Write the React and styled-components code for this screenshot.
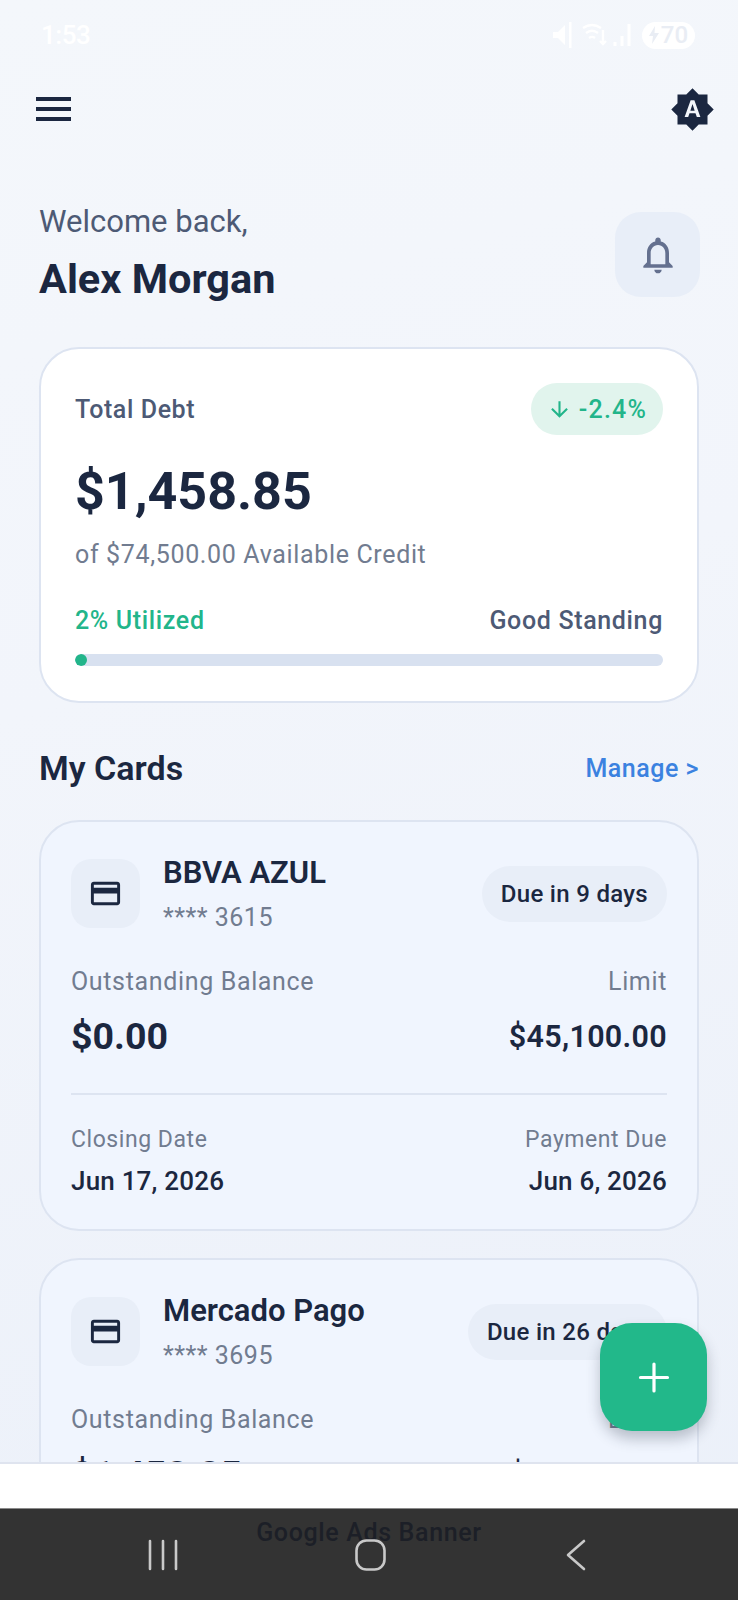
import React from "react";
import styled, { createGlobalStyle } from "styled-components";

const GlobalStyle = createGlobalStyle`
  html, body { margin: 0; padding: 0; background: #fff; }
  * { box-sizing: border-box; }
  body { font-family: Roboto, "Liberation Sans", sans-serif; }
`;

const Screen = styled.div`
  position: relative;
  width: 738px;
  height: 1600px;
  overflow: hidden;
  display: flex;
  flex-direction: column;
  background: linear-gradient(165deg, #f4f7fb 0%, #f2f5fb 40%, #ebf0f9 100%);
`;

const StatusBar = styled.div`
  height: 70px;
  flex: none;
  padding: 0 43px 0 41px;
  display: flex;
  align-items: center;
  justify-content: space-between;
  color: #fff;
`;
const Clock = styled.span`
  font-size: 26px;
  font-weight: 500;
  letter-spacing: -0.5px;
`;
const StatusIcons = styled.div`
  display: flex;
  align-items: center;
  gap: 7px;
`;
const Battery = styled.span`
  width: 53px;
  height: 27px;
  border-radius: 14px;
  background: #fff;
  color: #e9edf4;
  font-size: 24px;
  font-weight: 500;
  line-height: 27px;
  display: flex;
  align-items: center;
  justify-content: center;
  gap: 2px;
`;

const AppBar = styled.div`
  height: 78px;
  flex: none;
  padding: 0 23px 0 36px;
  display: flex;
  align-items: center;
  justify-content: space-between;
`;
const Burger = styled.div`
  width: 35px;
  display: flex;
  flex-direction: column;
  gap: 6px;
  span {
    display: block;
    height: 4px;
    background: #1b2740;
  }
`;

const Content = styled.div`
  flex: 1;
  min-height: 0;
  overflow: hidden;
  padding: 0 39px;
`;

const Greeting = styled.div`
  display: flex;
  justify-content: space-between;
  align-items: flex-start;
  padding-top: 54px;
`;
const WelcomeText = styled.div`
  font-size: 31px;
  line-height: 40px;
  color: #4d5a75;
`;
const UserName = styled.div`
  font-size: 41.5px;
  line-height: 48px;
  font-weight: 700;
  color: #1b2740;
  margin-top: 13px;
`;
const BellButton = styled.div`
  width: 85px;
  height: 85px;
  margin: 10px -1px 0 0;
  border-radius: 26px;
  background: #e8eef8;
  display: flex;
  align-items: center;
  justify-content: center;
`;

const HeroCard = styled.div`
  margin-top: 44px;
  height: 356px;
  background: #fff;
  border: 2px solid #dde4f1;
  border-radius: 40px;
  padding: 34px 34px 0;
`;
const Row = styled.div`
  display: flex;
  justify-content: space-between;
  align-items: ${(p) => p.$align || "center"};
`;
const HeroLabel = styled.div`
  font-size: 25px;
  font-weight: 500;
  letter-spacing: 0.6px;
  color: #4d5a75;
`;
const TrendPill = styled.div`
  height: 52px;
  width: 132px;
  border-radius: 26px;
  background: #e1f4ed;
  color: #22b58a;
  font-size: 25px;
  font-weight: 500;
  letter-spacing: 1.2px;
  display: flex;
  align-items: center;
  justify-content: center;
  gap: 7px;
`;
const HeroAmount = styled.div`
  margin-top: 27px;
  font-size: 52px;
  line-height: 60px;
  font-weight: 700;
  color: #1b2740;
`;
const HeroSub = styled.div`
  margin-top: 17px;
  font-size: 25px;
  line-height: 32px;
  letter-spacing: 0.65px;
  color: #717c90;
`;
const UsageRow = styled(Row)`
  margin-top: 34px;
  font-size: 25px;
  line-height: 32px;
  font-weight: 500;
  letter-spacing: 0.65px;
`;
const UsageText = styled.span`
  color: ${(p) => p.$color};
`;
const Track = styled.div`
  margin-top: 17px;
  height: 12px;
  border-radius: 6px;
  background: #d8e1f0;
  overflow: hidden;
`;
const Fill = styled.div`
  height: 100%;
  border-radius: 6px;
  background: #22b58a;
`;

const SectionHead = styled(Row)`
  margin-top: 45px;
  height: 40px;
`;
const SectionTitle = styled.div`
  font-size: 34px;
  font-weight: 600;
  color: #1b2740;
`;
const ManageLink = styled.div`
  font-size: 25px;
  font-weight: 500;
  letter-spacing: 0.5px;
  color: #3b82e0;
`;

const CardList = styled.div`
  margin-top: 32px;
  display: flex;
  flex-direction: column;
  gap: 27px;
`;
const CreditCard = styled.div`
  height: 411px;
  flex: none;
  background: #f0f5fe;
  border: 2px solid #dde4f1;
  border-radius: 40px;
  padding: 36px 30px 0;
`;
const CardTop = styled.div`
  display: flex;
  align-items: center;
  height: 70px;
`;
const IconBox = styled.div`
  width: 69px;
  height: 69px;
  flex: none;
  border-radius: 20px;
  background: #e8eef8;
  display: flex;
  align-items: center;
  justify-content: center;
`;
const CardInfo = styled.div`
  margin-left: 23px;
  flex: 1;
`;
const CardName = styled.div`
  font-size: 31px;
  line-height: 36px;
  font-weight: 600;
  color: #1b2740;
  margin-top: 1px;
`;
const CardNumber = styled.div`
  margin-top: 12px;
  font-size: 25px;
  line-height: 30px;
  letter-spacing: 0.5px;
  color: #717c90;
`;
const DuePill = styled.div`
  height: 56px;
  padding: 0 19px;
  margin-top: 2px;
  border-radius: 28px;
  background: #e8eef8;
  color: #1b2740;
  font-size: 24px;
  font-weight: 500;
  letter-spacing: 0.3px;
  line-height: 56px;
  white-space: nowrap;
`;
const FigureLabel = styled.div`
  font-size: 25px;
  line-height: 32px;
  letter-spacing: 0.65px;
  color: #717c90;
`;
const BalanceLabels = styled(Row)`
  margin-top: 38px;
`;
const BalanceValues = styled(Row)`
  margin-top: 14px;
  height: 48px;
  padding-bottom: 33px;
  box-sizing: content-box;
  border-bottom: 2px solid #dde4f1;
  color: #1b2740;
`;
const Balance = styled.div`
  font-size: 37.5px;
  font-weight: 700;
`;
const Limit = styled.div`
  font-size: 30.5px;
  font-weight: 600;
  letter-spacing: 0.3px;
`;
const DateLabel = styled.div`
  font-size: 23px;
  line-height: 30px;
  letter-spacing: 0.55px;
  color: #717c90;
`;
const DateValue = styled.div`
  margin-top: 10px;
  font-size: 26px;
  line-height: 32px;
  font-weight: 500;
  letter-spacing: 0.2px;
  color: #1b2740;
`;
const DateCol = styled.div`
  text-align: ${(p) => p.$align || "left"};
`;
const DatesRow = styled(Row)`
  margin-top: 30px;
`;

const AdBanner = styled.div`
  flex: none;
  height: 138px;
  background: #fff;
  border-top: 2px solid #dfe4ef;
`;

const Fab = styled.div`
  position: absolute;
  left: 600px;
  top: 1323px;
  width: 107px;
  height: 108px;
  border-radius: 32px;
  background: #22b88a;
  box-shadow: 0 8px 14px rgba(40, 50, 70, 0.28);
  display: flex;
  align-items: center;
  justify-content: center;
`;

const NavBar = styled.div`
  position: absolute;
  left: 0;
  right: 0;
  bottom: 0;
  height: 92px;
  background: #333333;
  border-top: 1px solid #8a8a8a;
  display: grid;
  grid-template-columns: 328px 82px 1fr;
  align-items: center;
`;
const AdLabel = styled.div`
  position: absolute;
  left: 0;
  right: 0;
  top: 10px;
  text-align: center;
  font-size: 25px;
  line-height: 28px;
  font-weight: 500;
  letter-spacing: 0.65px;
  color: #1c1f27;
`;
const NavSlot = styled.div`
  position: relative;
  display: flex;
  justify-content: ${(p) => p.$justify || "center"};
  padding: ${(p) => p.$pad || 0};
`;

const Glyph = ({ d, size, color }) => (
  <svg width={size} height={size} viewBox="0 0 24 24" fill={color} style={{ display: "block" }}>
    <path d={d} />
  </svg>
);

const ICONS = {
  auto: "M10.85 12.65h2.3L12 9l-1.15 3.65zM20 8.69V4h-4.69L12 .69 8.69 4H4v4.69L.69 12 4 15.31V20h4.69L12 23.31 15.31 20H20v-4.69L23.31 12 20 8.69zM14.3 16l-.7-2h-3.2l-.7 2H7.8L11 7h2l3.2 9h-1.9z",
  bell: "M12 22c1.1 0 2-.9 2-2h-4c0 1.1.9 2 2 2zm6-6v-5c0-3.07-1.63-5.64-4.5-6.32V4c0-.83-.67-1.5-1.5-1.5s-1.5.67-1.5 1.5v.68C7.64 5.36 6 7.92 6 11v5l-2 2v1h16v-1l-2-2zm-2 1H8v-6c0-2.48 1.51-4.5 4-4.5s4 2.02 4 4.5v6z",
  card: "M20 4H4c-1.11 0-1.99.89-1.99 2L2 18c0 1.11.89 2 2 2h16c1.11 0 2-.89 2-2V6c0-1.11-.89-2-2-2zm0 14H4v-6h16v6zm0-10H4V6h16v2z",
  down: "M20 12l-1.41-1.41L13 16.17V4h-2v12.17l-5.58-5.59L4 12l8 8 8-8z",
};

const cards = [
  {
    name: "BBVA AZUL",
    number: "**** 3615",
    due: "Due in 9 days",
    balance: "$0.00",
    limit: "$45,100.00",
    closing: "Jun 17, 2026",
    payment: "Jun 6, 2026",
  },
  {
    name: "Mercado Pago",
    number: "**** 3695",
    due: "Due in 26 days",
    balance: "$1,458.85",
    limit: "$29,400.00",
    closing: "Jun 20, 2026",
    payment: "Jun 23, 2026",
  },
];

const App = () => (
  <Screen>
    <GlobalStyle />
    <StatusBar>
      <Clock>1:53</Clock>
      <StatusIcons>
        <svg width="22" height="26" viewBox="0 0 22 26" fill="#fff">
          <path d="M1 10h5l7-7v20l-7-7H1z" />
          <rect x="17" y="0" width="2.5" height="26" />
        </svg>
        <svg width="54" height="26" viewBox="0 0 54 26" fill="none" stroke="#fff" strokeWidth="2.4">
          <path d="M2 6c6-4 12-4 18 0M5 11c4-3 8-3 12 0M8 16c2-1.5 4-1.5 6 0" />
          <path d="M22 8v14m-3-3l3 3 3-3" />
          <path d="M34 24v-4M41 24v-10M48 24V2" strokeWidth="3" />
        </svg>
        <Battery>
          <svg width="10" height="18" viewBox="0 0 10 18" fill="#e9edf4">
            <path d="M6 0L0 10h4l-1 8 7-11H5.500z" />
          </svg>
          70
        </Battery>
      </StatusIcons>
    </StatusBar>

    <AppBar>
      <Burger>
        <span />
        <span />
        <span />
      </Burger>
      <Glyph d={ICONS.auto} size={45} color="#1b2740" />
    </AppBar>

    <Content>
      <Greeting>
        <div>
          <WelcomeText>Welcome back,</WelcomeText>
          <UserName>Alex Morgan</UserName>
        </div>
        <BellButton>
          <Glyph d={ICONS.bell} size={44} color="#64708f" />
        </BellButton>
      </Greeting>

      <HeroCard>
        <Row>
          <HeroLabel>Total Debt</HeroLabel>
          <TrendPill>
            <Glyph d={ICONS.down} size={25} color="#22b58a" />
            -2.4%
          </TrendPill>
        </Row>
        <HeroAmount>$1,458.85</HeroAmount>
        <HeroSub>of $74,500.00 Available Credit</HeroSub>
        <UsageRow>
          <UsageText $color="#22b58a">2% Utilized</UsageText>
          <UsageText $color="#4d5a75">Good Standing</UsageText>
        </UsageRow>
        <Track>
          <Fill style={{ width: "2%" }} />
        </Track>
      </HeroCard>

      <SectionHead>
        <SectionTitle>My Cards</SectionTitle>
        <ManageLink>Manage &gt;</ManageLink>
      </SectionHead>

      <CardList>
        {cards.map((card) => (
          <CreditCard key={card.name}>
            <CardTop>
              <IconBox>
                <Glyph d={ICONS.card} size={35} color="#1b2740" />
              </IconBox>
              <CardInfo>
                <CardName>{card.name}</CardName>
                <CardNumber>{card.number}</CardNumber>
              </CardInfo>
              <DuePill>{card.due}</DuePill>
            </CardTop>
            <BalanceLabels>
              <FigureLabel>Outstanding Balance</FigureLabel>
              <FigureLabel>Limit</FigureLabel>
            </BalanceLabels>
            <BalanceValues>
              <Balance>{card.balance}</Balance>
              <Limit>{card.limit}</Limit>
            </BalanceValues>
            <DatesRow>
              <DateCol>
                <DateLabel>Closing Date</DateLabel>
                <DateValue>{card.closing}</DateValue>
              </DateCol>
              <DateCol $align="right">
                <DateLabel>Payment Due</DateLabel>
                <DateValue>{card.payment}</DateValue>
              </DateCol>
            </DatesRow>
          </CreditCard>
        ))}
      </CardList>
    </Content>

    <AdBanner />

    <Fab>
      <svg width="46" height="46" viewBox="0 0 46 46" stroke="#fff" strokeWidth="3.2" strokeLinecap="round">
        <path d="M23 10v27M9.5 23.500h27" />
      </svg>
    </Fab>

    <NavBar>
      <AdLabel>Google Ads Banner</AdLabel>
      <NavSlot $justify="flex-end" $pad="0 150px 0 0">
        <svg width="30" height="32" viewBox="0 0 30 32" stroke="#c9c9c9" strokeWidth="2.6" strokeLinecap="round">
          <path d="M2 2v28M15 2v28M28 2v28" />
        </svg>
      </NavSlot>
      <NavSlot $pad="0 0 0 2px">
        <svg width="31" height="32" viewBox="0 0 31 32" fill="none" stroke="#c9c9c9" strokeWidth="2.6">
          <rect x="1.500" y="1.500" width="28" height="29" rx="10" />
        </svg>
      </NavSlot>
      <NavSlot $justify="flex-start" $pad="0 0 0 155px">
        <svg width="22" height="32" viewBox="0 0 22 32" fill="none" stroke="#c9c9c9" strokeWidth="2.6" strokeLinecap="round" strokeLinejoin="round">
          <path d="M19 2L3 16l16 14" />
        </svg>
      </NavSlot>
    </NavBar>
  </Screen>
);

export default App;
